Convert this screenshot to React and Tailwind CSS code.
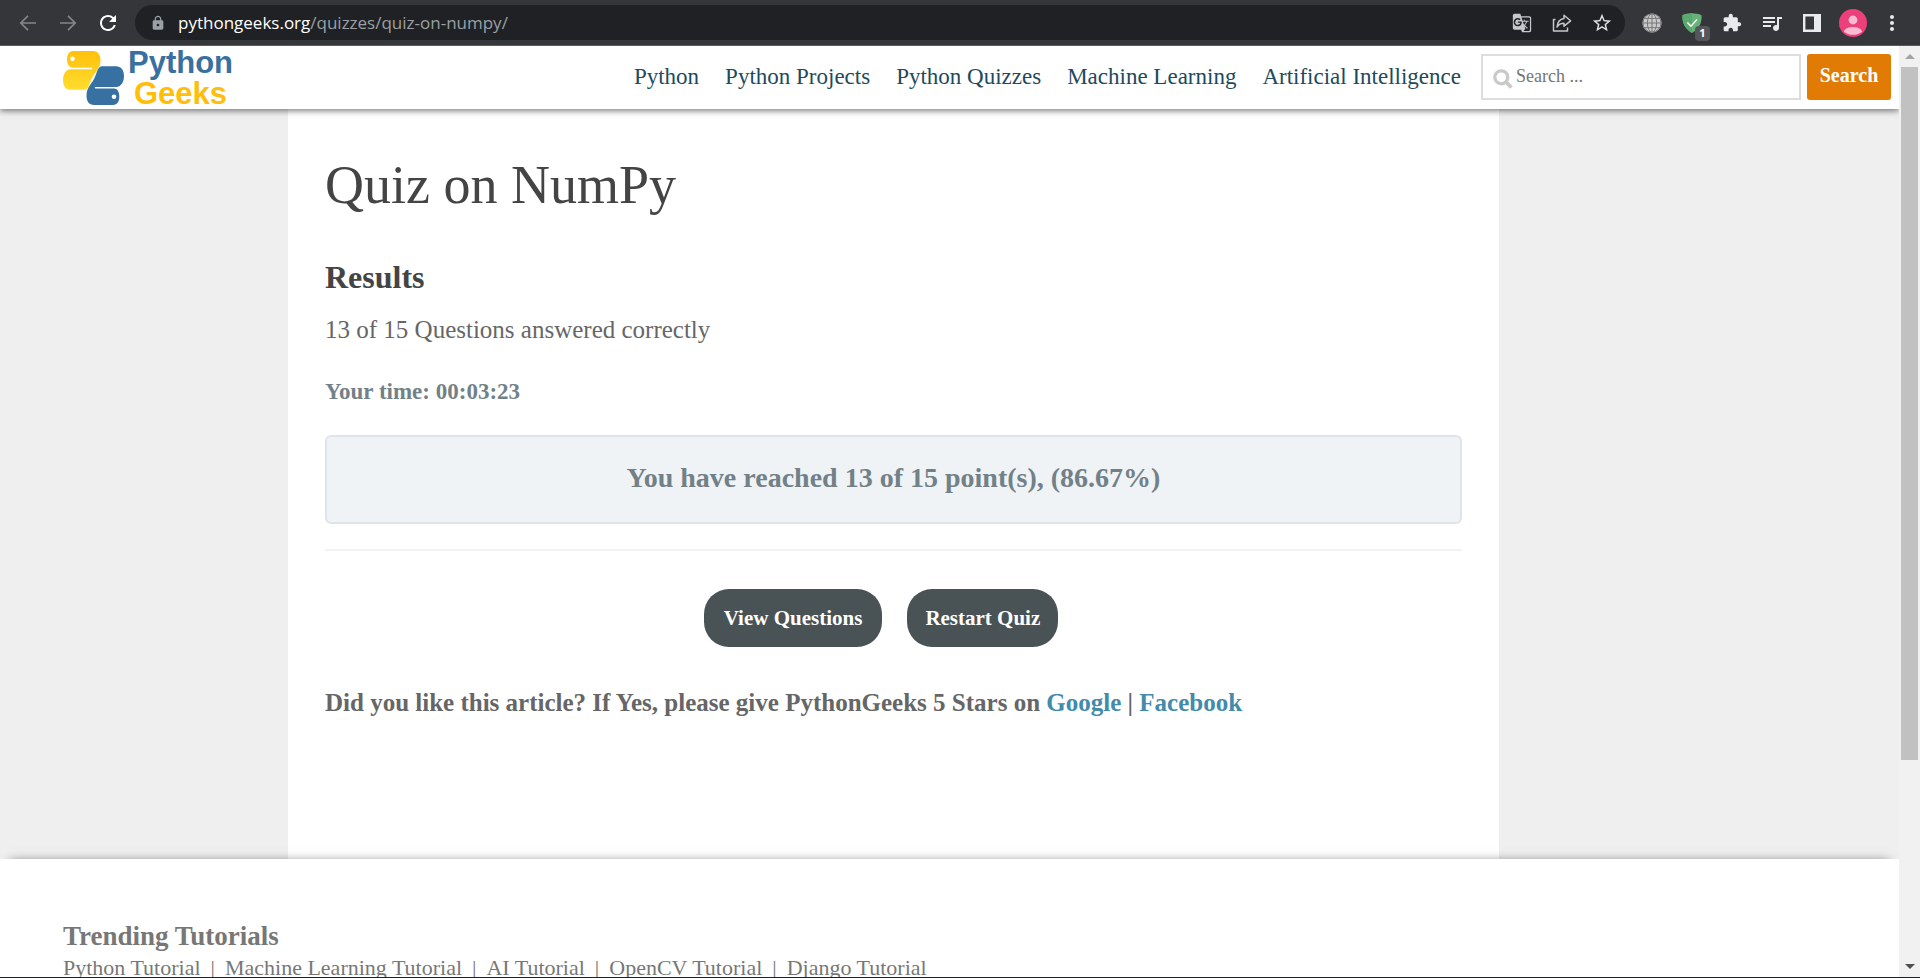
import { MdExtension, MdGTranslate, MdLock, MdMoreVert, MdQueueMusic, MdRefresh, MdStarBorder } from 'react-icons/md';

const NAV = ['Python', 'Python Projects', 'Python Quizzes', 'Machine Learning', 'Artificial Intelligence'];
const TUTORIALS = ['Python Tutorial', 'Machine Learning Tutorial', 'AI Tutorial', 'OpenCV Tutorial', 'Django Tutorial'];

function IconButton({ label, children, className = 'size-5' }) {
  return (
    <button type="button" aria-label={label} className={`flex shrink-0 items-center justify-center ${className}`}>
      {children}
    </button>
  );
}

function BrowserBar() {
  return (
    <div className="flex h-[46px] shrink-0 items-center border-b border-[#5a5b5e] bg-[#35363a] pr-[18px] pl-[18px] font-['Open_Sans','Noto_Sans',sans-serif] text-[#e8eaed]">
      <div className="flex items-center gap-5 text-[#84868a]">
        <IconButton label="Back">
          <svg viewBox="0 0 20 20" className="size-5" fill="none" stroke="currentColor" strokeWidth="1.7">
            <path d="M18 10H3M10 2.8L2.8 10L10 17.2" />
          </svg>
        </IconButton>
        <IconButton label="Forward">
          <svg viewBox="0 0 20 20" className="size-5" fill="none" stroke="currentColor" strokeWidth="1.7">
            <path d="M2 10H17M10 2.8L17.2 10L10 17.2" />
          </svg>
        </IconButton>
        <IconButton label="Reload">
          <MdRefresh className="size-6 shrink-0 text-white" />
        </IconButton>
      </div>
      <div className="ml-[17px] flex h-[35px] flex-1 items-center rounded-full bg-[#202124] pr-[13px] pl-[15px]">
        <MdLock className="size-4 text-[#9aa0a6]" />
        <p className="ml-3 flex-1 text-[17px] leading-6 text-[#9aa0a6]">
          <span className="text-white">pythongeeks.org</span>/quizzes/quiz-on-numpy/
        </p>
        <div className="flex items-center gap-5 text-[#c4c7cb]">
          <IconButton label="Translate this page">
            <MdGTranslate className="size-5" />
          </IconButton>
          <IconButton label="Share">
            <svg viewBox="0 0 20 20" className="size-5" fill="none" stroke="currentColor" strokeWidth="1.5" strokeLinejoin="round">
              <path d="M3.5 6.5H1.5V18H15.5V14.5" />
              <path d="M12 2.2L18.6 7.8L12 13.2V10.2C8.6 10.2 6.6 11.4 5 14C5.4 9 8 6 12 5.4Z" />
            </svg>
          </IconButton>
          <IconButton label="Bookmark this page">
            <MdStarBorder className="size-[22px] shrink-0 text-[#dfe1e4]" />
          </IconButton>
        </div>
      </div>
      <div className="ml-[17px] flex items-center gap-5">
        <IconButton label="Web extension">
          <svg viewBox="0 0 20 20" className="size-5">
            <circle cx="10" cy="10" r="9.6" fill="#c9c9c9" />
            <g fill="none" stroke="#77787b" strokeWidth="1">
              <circle cx="10" cy="10" r="9.1" />
              <ellipse cx="10" cy="10" rx="4.6" ry="9.3" />
              <path d="M10 .5V19.5M.5 10H19.5M2 5.4H18M2 14.6H18" />
            </g>
          </svg>
        </IconButton>
        <IconButton label="Ad blocker" className="relative size-5">
          <svg viewBox="0 0 20 20" className="size-5">
            <path d="M10 .3C13 .3 16.6 1 19.6 2.2C19.8 9.6 17.6 15.4 10 20C2.4 15.4 .2 9.6 .4 2.2C3.4 1 7 .3 10 .3Z" fill="#67b279" />
            <path d="M10 .3V20C2.4 15.4 .2 9.6 .4 2.2C3.4 1 7 .3 10 .3Z" fill="#5aa96d" />
            <path d="M5.4 9.4L9 13.2L15 6.6" fill="none" stroke="#fff" strokeWidth="1.5" />
          </svg>
          <span className="absolute top-[13px] left-[13px] flex h-[15px] w-[15px] items-center justify-center rounded-sm bg-[#55565a] text-[11px] font-bold text-white">1</span>
        </IconButton>
        <IconButton label="Extensions">
          <MdExtension className="size-5" />
        </IconButton>
        <IconButton label="Media controls">
          <MdQueueMusic className="size-6 shrink-0" />
        </IconButton>
        <IconButton label="Side panel">
          <svg viewBox="0 0 20 20" className="size-5">
            <path d="M1 1H19V19H1ZM3.4 3.4V16.6H12V3.4Z" fill="currentColor" fillRule="evenodd" />
          </svg>
        </IconButton>
      </div>
      <IconButton label="Profile" className="ml-[17px] size-7">
        <svg viewBox="0 0 28 28" className="size-7">
          <circle cx="14" cy="14" r="14" fill="#ec407a" />
          <circle cx="14" cy="11" r="4.4" fill="#f8bbd0" />
          <path d="M4.8 22.4C6.4 19.2 10 18 14 18S21.600 19.200 23.200 22.400A14 14 0 0 1 4.800 22.400Z" fill="#f8bbd0" />
        </svg>
      </IconButton>
      <IconButton label="Menu" className="ml-[15px] size-5">
        <MdMoreVert className="size-6 shrink-0" />
      </IconButton>
    </div>
  );
}

function Logo() {
  return (
    <a href="#home" aria-label="Python Geeks" className="flex items-center gap-1 font-['Liberation_Sans',sans-serif] text-[31px] leading-[31px] font-bold">
      <svg viewBox="0 0 61 54" className="h-[54px] w-[61px]">
        <defs>
          <linearGradient id="snake" x1="0" y1="0" x2="0" y2="1">
            <stop offset="0" stopColor="#ffc00c" />
            <stop offset="1" stopColor="#ffdd2e" />
          </linearGradient>
        </defs>
        <path d="M10 0H30C35 0 37.500 4 37.500 9C37.500 17 33 20 29.500 26C26.500 31 26 38.700 22 38.700H7C2 38.700 0 34 0 29C0 23 3 18.300 8 18.300H28.500C29.500 18.300 29.500 16.800 28.500 16.800H10C6 16.800 4 13 4 8.500S6 0 10 0Z" fill="url(#snake)" />
        <circle cx="9.500" cy="7.800" r="2.300" fill="#fff" />
        <path d="M39 15.300H53C58 15.300 61 19 61 25S58 36 53 36H32.500C31.500 36 31.500 37.600 32.500 37.600H51C54.500 37.600 56.300 41 56.300 45.500S54.500 54 50 54H31C26 54 23.500 50 23.500 45C23.500 37 27.500 34 31 28C34 22.500 34.500 15.300 39 15.300Z" fill="#3771a2" />
        <circle cx="51" cy="45.800" r="2.300" fill="#fff" />
      </svg>
      <span className="flex flex-col">
        <span className="text-[#3a709f]">Python</span>
        <span className="pl-1.5 text-[#ffbe0b]">Geeks</span>
      </span>
    </a>
  );
}

function SiteHeader() {
  return (
    <header className="z-10 flex h-[63px] shrink-0 items-center bg-white pr-2 pl-[63px] shadow-[0_2px_6px_rgba(0,0,0,0.5)]">
      <Logo />
      <nav className="ml-auto flex gap-[26px] pb-0.5 text-[23px] leading-8 text-[#1d4a5c]">
        {NAV.map((item) => (
          <a key={item} href="#nav">{item}</a>
        ))}
      </nav>
      <form className="ml-5 flex gap-1.5 pb-0.5" onSubmit={(e) => e.preventDefault()}>
        <div className="relative">
          <svg viewBox="0 0 20 20" className="absolute top-[15px] left-3 size-5" fill="none" stroke="#c9c9c9">
            <circle cx="8.300" cy="8.300" r="6.500" strokeWidth="3.300" />
            <path d="M13 13L18.500 18.500" strokeWidth="3.800" />
          </svg>
          <input type="search" aria-label="Search" placeholder="Search ..." className="h-[46px] w-80 border-2 border-[#ddd] bg-white pl-[33px] text-[18px] text-[#555] placeholder:text-[#757575]" />
        </div>
        <button type="submit" className="h-[46px] w-[84px] rounded-[3px] bg-[#e17b03] pb-1 text-[20px] font-bold text-white">Search</button>
      </form>
    </header>
  );
}

function Results() {
  return (
    <div className="flex min-h-0 flex-1 bg-[#efefef] pr-[400px] pl-72">
      <main className="h-full flex-1 bg-white px-[37px] pt-[46px]">
        <h1 className="text-[54px] leading-[60px] text-[#444]">Quiz on NumPy</h1>
        <h2 className="mt-[42px] text-[32px] leading-10 font-bold text-[#444]">Results</h2>
        <p className="mt-[15px] text-[25px] leading-9 text-[#666]">13 of 15 Questions answered correctly</p>
        <p className="mt-7 text-[23px] leading-8 font-bold text-[#728188]">Your time: 00:03:23</p>
        <p className="mt-[27px] rounded-md border-2 border-[#dfe4eb] bg-[#eff3f6] pt-[21px] pb-6 text-center text-[28px] leading-10 font-bold text-[#728188]">
          You have reached 13 of 15 point(s), (86.67%)
        </p>
        <hr className="mt-[25px] border-t-2 border-[#eff3f6]" />
        <div className="mt-[38px] flex justify-center text-[21px] leading-[30px] font-bold text-white">
          <button type="button" className="mr-[25px] rounded-[25px] bg-[#495255] px-5 py-3.5">View Questions</button>
          <button type="button" className="mr-[25px] rounded-[25px] bg-[#495255] px-[18px] py-3.5">Restart Quiz</button>
        </div>
        <p className="mt-[38px] text-[25px] leading-9 font-bold text-[#666]">
          Did you like this article? If Yes, please give PythonGeeks 5 Stars on{' '}
          <a href="#google" className="text-[#428bab]">Google</a> | <a href="#facebook" className="text-[#428bab]">Facebook</a>
        </p>
      </main>
    </div>
  );
}

function SiteFooter() {
  return (
    <footer className="h-[118px] shrink-0 overflow-hidden bg-white px-[63px] pt-[61px] text-[#777] shadow-[0_-8px_10px_-10px_rgba(0,0,0,0.5)]">
      <h2 className="text-[27px] leading-8 font-bold">Trending Tutorials</h2>
      <ul className="flex text-[22px] leading-8">
        {TUTORIALS.map((item, i) => (
          <li key={item} className="flex">
            {i > 0 && <span className="px-2.5">|</span>}
            <a href="#tutorial">{item}</a>
          </li>
        ))}
      </ul>
    </footer>
  );
}

function ScrollRail() {
  return (
    <div className="flex w-[21px] shrink-0 flex-col items-center bg-[#f1f1f1]">
      <button type="button" aria-label="Scroll up" className="flex h-[21px] w-full shrink-0 items-center justify-center">
        <svg viewBox="0 0 10 5" className="h-[5px] w-2.5"><path d="M5 0L10 5H0Z" fill="#a3a3a3" /></svg>
      </button>
      <div className="flex w-[17px] flex-1 flex-col">
        <div className="h-[78%] bg-[#c1c1c1]" />
      </div>
      <button type="button" aria-label="Scroll down" className="flex h-[21px] w-full shrink-0 items-center justify-center">
        <svg viewBox="0 0 10 5" className="h-[5px] w-2.5"><path d="M0 0H10L5 5Z" fill="#505050" /></svg>
      </button>
    </div>
  );
}

export default function App() {
  return (
    <div className="flex h-screen flex-col overflow-hidden border-b border-[#202124] bg-white">
      <BrowserBar />
      <div className="flex min-h-0 flex-1">
        <div className="flex min-w-0 flex-1 flex-col overflow-hidden font-['Liberation_Serif',serif]">
          <SiteHeader />
          <Results />
          <SiteFooter />
        </div>
        <ScrollRail />
      </div>
    </div>
  );
}
